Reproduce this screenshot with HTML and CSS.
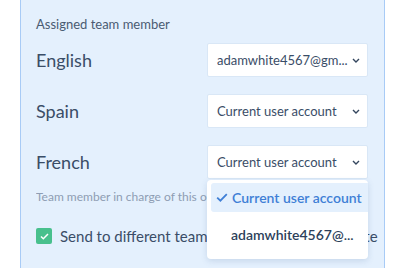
FILE: index.html
```html
<!DOCTYPE html>
<html>
<head>
<meta charset="utf-8">
<link rel="stylesheet" href="styles.css">
</head>
<body>
<div class="panel">
  <div class="title">Assigned team member</div>
  <div class="rows">
    <div class="row">
      <span class="lang">English</span>
      <div class="select"><span class="val">adamwhite4567@gm...</span><svg class="chev" width="8" height="5" viewBox="0 0 8 5"><path d="M1 1l3 3 3-3" fill="none" stroke="#34465e" stroke-width="1.4"/></svg></div>
    </div>
    <div class="row">
      <span class="lang">Spain</span>
      <div class="select"><span class="val">Current user account</span><svg class="chev" width="8" height="5" viewBox="0 0 8 5"><path d="M1 1l3 3 3-3" fill="none" stroke="#34465e" stroke-width="1.4"/></svg></div>
    </div>
    <div class="row">
      <span class="lang">French</span>
      <div class="select-wrap">
        <div class="select"><span class="val">Current user account</span><svg class="chev" width="8" height="5" viewBox="0 0 8 5"><path d="M1 1l3 3 3-3" fill="none" stroke="#34465e" stroke-width="1.4"/></svg></div>
        <div class="menu">
          <div class="item active"><svg class="tick" width="12" height="9" viewBox="0 0 12 9"><path d="M1.2 4.6l3.2 3.1L10.8 1.2" fill="none" stroke="#3f7fd6" stroke-width="1.8"/></svg>Current user account</div>
          <div class="item second">adamwhite4567@...</div>
        </div>
      </div>
    </div>
  </div>
  <div class="help">Team member in charge of this order will receive notifications</div>
  <div class="check-row">
    <span class="box"><svg width="9" height="7" viewBox="0 0 9 7"><path d="M1 3.5l2.3 2.2L8 1" fill="none" stroke="#fff" stroke-width="1.5"/></svg></span>
    <span class="check-label">Send to different team member for each website</span>
  </div>
</div>
</body>
</html>
```

FILE: styles.css
```css
html, body {
  margin: 0;
  padding: 0;
  background: #ffffff;
  height: 268px;
  overflow: hidden;
}
body {
  font-family: Lato, "Noto Sans", sans-serif;
}
.panel {
  margin-left: 20px;
  width: 365px;
  height: 268px;
  box-sizing: border-box;
  background: #e4f0fd;
  border-left: 1px solid #a8cbf6;
  border-right: 1px solid #a8cbf6;
  padding: 15px 16px 0 15px;
  overflow: hidden;
}
.title {
  font-size: 13px;
  color: #4a5b72;
  line-height: 18px;
}
.rows {
  display: flex;
  flex-direction: column;
  gap: 17px;
  margin-top: 10px;
}
.row {
  display: flex;
  align-items: center;
  justify-content: space-between;
}
.lang {
  font-size: 18px;
  color: #3a4d67;
}
.select-wrap {
  position: relative;
}
.select {
  width: 161px;
  height: 34px;
  box-sizing: border-box;
  background: #fff;
  border: 1px solid #d9e7f6;
  border-radius: 2px;
  display: flex;
  align-items: center;
  padding: 0 7px 0 9px;
}
.val {
  flex: 1;
  font-size: 13px;
  color: #3a4d67;
  white-space: nowrap;
  overflow: hidden;
}
.chev {
  flex: none;
}
.menu {
  position: absolute;
  left: 0;
  top: 35px;
  width: 161px;
  box-sizing: border-box;
  background: #fff;
  border-radius: 4px;
  box-shadow: 0 2px 6px rgba(60, 100, 150, 0.18);
  padding: 3px 0 2px 4px;
  z-index: 2;
}
.item {
  height: 29px;
  display: flex;
  align-items: center;
  padding-left: 20px;
  font-size: 14px;
  font-weight: 600;
  color: #2d3f5b;
  white-space: nowrap;
  border-radius: 3px 0 0 3px;
}
.item.second {
  height: 45px;
}
.item.active {
  background: #e4f0fd;
  color: #3f7fd6;
  padding-left: 5px;
}
.tick {
  margin-right: 4px;
}
.help {
  margin-top: 10px;
  font-size: 12px;
  color: #8e9db3;
  white-space: nowrap;
  overflow: hidden;
}
.check-row {
  margin-top: 23px;
  display: flex;
  align-items: center;
  gap: 8px;
}
.box {
  width: 16px;
  height: 16px;
  border-radius: 2px;
  background: #48c08d;
  display: flex;
  align-items: center;
  justify-content: center;
  flex: none;
}
.check-label {
  font-size: 15px;
  color: #3a4d67;
  white-space: nowrap;
}
```
